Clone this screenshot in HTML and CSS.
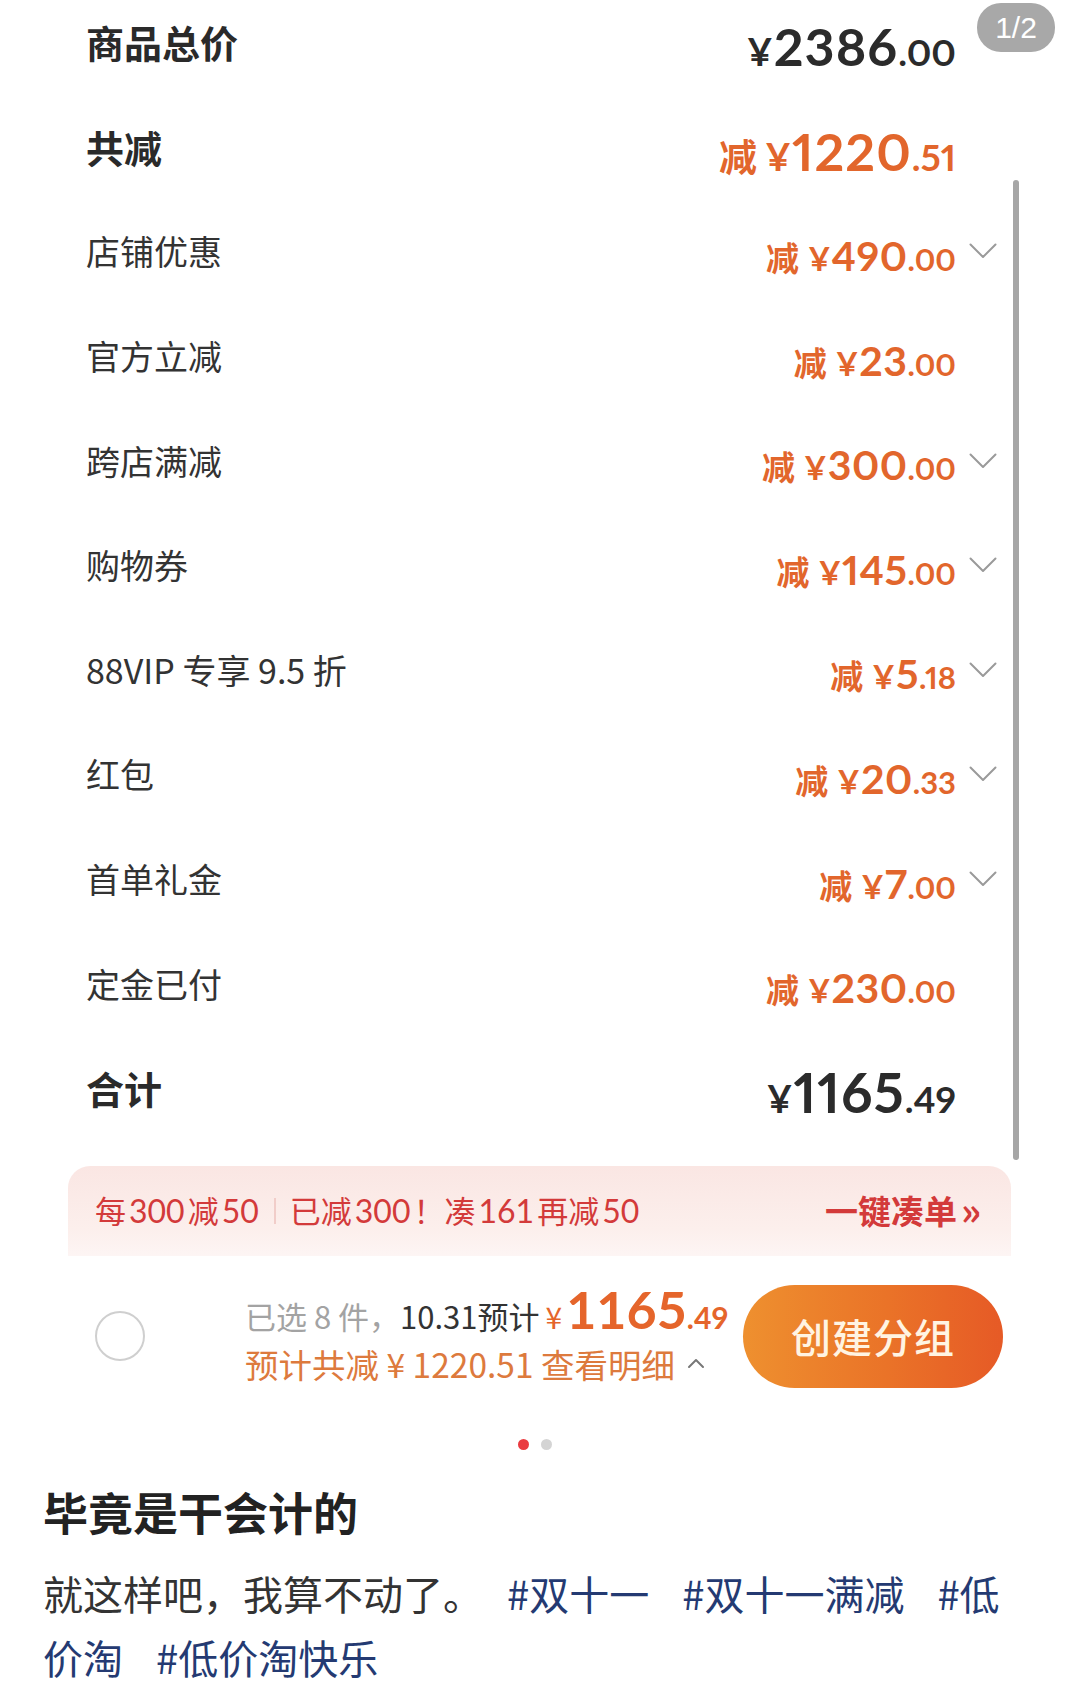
FILE: index.html
```html
<!DOCTYPE html>
<html lang="zh-CN">
<head>
<meta charset="utf-8">
<title>订单明细</title>
<link rel="stylesheet" href="styles.css">
</head>
<body>
<div class="page">
  <div class="badge">1/2</div>
  <div class="scrollbar"></div>

  <div class="list">
    <div class="row bold">
      <span class="label">商品总价</span>
      <span class="val dark big"><span class="cur">¥</span><span class="int">2386</span><span class="dec">.00</span></span>
      <span class="chev"></span>
    </div>
    <div class="row bold">
      <span class="label">共减</span>
      <span class="val big"><span class="pre">减</span><span class="cur">¥</span><span class="int">1220</span><span class="dec">.51</span></span>
      <span class="chev"></span>
    </div>
    <div class="row">
      <span class="label">店铺优惠</span>
      <span class="val"><span class="pre">减</span><span class="cur">¥</span><span class="int">490</span><span class="dec">.00</span></span>
      <span class="chev"><svg viewBox="0 0 28 16" width="28" height="16"><polyline points="1.5,1.5 14,14 26.5,1.5"/></svg></span>
    </div>
    <div class="row">
      <span class="label">官方立减</span>
      <span class="val"><span class="pre">减</span><span class="cur">¥</span><span class="int">23</span><span class="dec">.00</span></span>
      <span class="chev"></span>
    </div>
    <div class="row">
      <span class="label">跨店满减</span>
      <span class="val"><span class="pre">减</span><span class="cur">¥</span><span class="int">300</span><span class="dec">.00</span></span>
      <span class="chev"><svg viewBox="0 0 28 16" width="28" height="16"><polyline points="1.5,1.5 14,14 26.5,1.5"/></svg></span>
    </div>
    <div class="row">
      <span class="label">购物券</span>
      <span class="val"><span class="pre">减</span><span class="cur">¥</span><span class="int">145</span><span class="dec">.00</span></span>
      <span class="chev"><svg viewBox="0 0 28 16" width="28" height="16"><polyline points="1.5,1.5 14,14 26.5,1.5"/></svg></span>
    </div>
    <div class="row">
      <span class="label">88VIP 专享 9.5 折</span>
      <span class="val"><span class="pre">减</span><span class="cur">¥</span><span class="int">5</span><span class="dec">.18</span></span>
      <span class="chev"><svg viewBox="0 0 28 16" width="28" height="16"><polyline points="1.5,1.5 14,14 26.5,1.5"/></svg></span>
    </div>
    <div class="row">
      <span class="label">红包</span>
      <span class="val"><span class="pre">减</span><span class="cur">¥</span><span class="int">20</span><span class="dec">.33</span></span>
      <span class="chev"><svg viewBox="0 0 28 16" width="28" height="16"><polyline points="1.5,1.5 14,14 26.5,1.5"/></svg></span>
    </div>
    <div class="row">
      <span class="label">首单礼金</span>
      <span class="val"><span class="pre">减</span><span class="cur">¥</span><span class="int">7</span><span class="dec">.00</span></span>
      <span class="chev"><svg viewBox="0 0 28 16" width="28" height="16"><polyline points="1.5,1.5 14,14 26.5,1.5"/></svg></span>
    </div>
    <div class="row">
      <span class="label">定金已付</span>
      <span class="val"><span class="pre">减</span><span class="cur">¥</span><span class="int">230</span><span class="dec">.00</span></span>
      <span class="chev"></span>
    </div>
    <div class="row bold">
      <span class="label">合计</span>
      <span class="val dark big total"><span class="cur">¥</span><span class="int">1165</span><span class="dec">.49</span></span>
      <span class="chev"></span>
    </div>
  </div>

  <div class="promo">
    <span class="promo-rule">每<span class="pn">300</span>减<span class="pn">50</span></span>
    <span class="promo-sep"></span>
    <span class="promo-msg">已减<span class="pn">300</span>！凑<span class="pn">161</span>再减<span class="pn">50</span></span>
    <span class="promo-link">一键凑单<span class="arrows">»</span></span>
  </div>

  <div class="bar">
    <span class="radio"></span>
    <div class="summary">
      <div class="sum-line1"><span class="muted">已选 8 件，</span><span class="strong">10.31预计</span><span class="s-cur">¥</span><span class="s-int">1165</span><span class="s-dec">.49</span></div>
      <div class="sum-line2">预计共减 ¥ 1220.51 查看明细 <svg class="up" viewBox="0 0 18 12" width="18" height="12"><polyline points="2,10 9,3 16,10"/></svg></div>
    </div>
    <div class="btn">创建分组</div>
  </div>

  <div class="dots"><span class="dot on"></span><span class="dot"></span></div>

  <div class="post">
    <h1 class="title">毕竟是干会计的</h1>
    <div class="body">
      <div class="line">就这样吧，我算不动了。<span class="tag first">#双十一</span><span class="tag">#双十一满减</span><span class="tag">#低</span></div>
      <div class="line"><span class="tag cont">价淘</span><span class="tag">#低价淘快乐</span></div>
    </div>
  </div>
</div>
</body>
</html>
```

FILE: styles.css
```css
* { box-sizing: border-box; }

html, body {
  margin: 0;
  padding: 0;
  background: #ffffff;
}

body {
  font-family: "Noto Sans CJK SC", "Noto Sans", sans-serif;
  color: #333333;
  width: 1080px;
  height: 1682px;
  overflow: hidden;
}

.page {
  position: relative;
  width: 1080px;
}

/* overlays */
.badge {
  position: absolute;
  left: 977px;
  top: 13px;
  width: 78px;
  height: 49px;
  border-radius: 24px;
  background: #a8a8a8;
  color: #ffffff;
  font-family: "Liberation Sans", sans-serif;
  font-size: 30px;
  line-height: 49px;
  text-align: center;
  z-index: 2;
}

.scrollbar {
  position: absolute;
  left: 1013px;
  top: 190px;
  width: 6px;
  height: 980px;
  border-radius: 3px;
  background: #a6a6a6;
  z-index: 2;
}

/* price list */
.list {
  margin-top: -10px;
}

.row {
  display: flex;
  align-items: center;
  height: 104.6px;
  padding: 0 83px 0 86px;
}

.label {
  flex: 1;
  font-size: 34px;
  line-height: 1;
  color: #333333;
}

.row.bold .label {
  font-size: 38px;
  font-weight: 700;
  color: #2a2a2a;
}

.val {
  display: flex;
  align-items: baseline;
  color: #e2662c;
  font-family: "Lato", "Liberation Sans", sans-serif;
  font-weight: 700;
  font-variant-numeric: proportional-nums;
  line-height: 1;
  margin-top: 8px;
}

.val .pre {
  font-family: "Noto Sans CJK SC", sans-serif;
  font-weight: 700;
  font-size: 33px;
  margin-right: 9px;
}

.val .cur {
  font-size: 33px;
  margin-right: 1px;
}

.val .int {
  font-size: 41px;
  letter-spacing: 0.5px;
}

.val .dec {
  font-size: 31px;
}

.val.big .pre {
  font-size: 38px;
  margin-right: 8px;
}

.val.big .cur {
  font-size: 38px;
}

.val.big .int {
  font-size: 52px;
  letter-spacing: 1px;
}

.val.big .dec {
  font-size: 37px;
}

.val.total .int {
  font-size: 55px;
}

.val.dark {
  color: #2b2b2b;
}

.chev {
  width: 28px;
  margin-left: 13px;
  display: flex;
  align-items: center;
}

.chev svg polyline {
  fill: none;
  stroke: #9a9a9a;
  stroke-width: 2;
  stroke-linecap: round;
  stroke-linejoin: round;
}

/* promo banner */
.promo {
  display: flex;
  align-items: center;
  height: 90px;
  margin: 25px 69px 0 68px;
  padding: 0 30px 0 27px;
  border-radius: 22px 22px 0 0;
  background: linear-gradient(180deg, #fae6e3 0%, #fcefec 70%, #fdf5f4 100%);
  color: #d33a3a;
  font-size: 31px;
  line-height: 1;
}

.pn {
  font-family: "Lato", "Liberation Sans", sans-serif;
  font-size: 32px;
  margin: 0 3px;
}

.promo-sep {
  width: 2px;
  height: 26px;
  background: #f1cdc9;
  margin: 0 14px 0 12px;
}

.promo-link {
  margin-left: auto;
  font-weight: 700;
  font-size: 33px;
  display: flex;
  align-items: center;
}

.arrows {
  font-size: 38px;
  margin-left: 4px;
  margin-top: -4px;
}

/* bottom bar */
.bar {
  display: flex;
  align-items: center;
  height: 103px;
  margin-top: 29px;
  padding-left: 95px;
}

.radio {
  width: 50px;
  height: 50px;
  border-radius: 50%;
  border: 2px solid #cfcfcf;
  margin-right: 100px;
  flex: none;
}

.summary {
  flex: 1;
  display: flex;
  flex-direction: column;
}

.sum-line1 {
  height: 54px;
  display: flex;
  align-items: baseline;
  font-size: 31px;
  white-space: nowrap;
  line-height: 54px;
}

.muted {
  color: #a3a3a3;
}

.strong {
  color: #333333;
}

.s-cur {
  color: #e5652b;
  font-size: 30px;
  margin: 0 4px 0 6px;
}

.s-int {
  color: #e5652b;
  font-family: "Lato", "Liberation Sans", sans-serif;
  font-weight: 700;
  font-size: 52px;
}

.s-dec {
  color: #e5652b;
  font-family: "Lato", "Liberation Sans", sans-serif;
  font-weight: 700;
  font-size: 30px;
}

.sum-line2 {
  height: 54px;
  display: flex;
  align-items: center;
  font-size: 33.5px;
  color: #dd7a3d;
  white-space: nowrap;
}

.up {
  margin-left: 12px;
}

.up polyline {
  fill: none;
  stroke: #777777;
  stroke-width: 2;
  stroke-linecap: round;
  stroke-linejoin: round;
}

.btn {
  flex: none;
  width: 260px;
  height: 103px;
  margin-right: 77px;
  border-radius: 52px;
  background: linear-gradient(90deg, #ee902f 0%, #ea7328 55%, #e65a26 100%);
  color: #fff4e2;
  font-size: 40px;
  font-weight: 500;
  display: flex;
  align-items: center;
  justify-content: center;
  letter-spacing: 1px;
}

/* pager dots */
.dots {
  display: flex;
  justify-content: center;
  gap: 12px;
  margin-top: 51px;
  padding-right: 11px;
}

.dot {
  width: 11px;
  height: 11px;
  border-radius: 50%;
  background: #d4d4d4;
}

.dot.on {
  background: #ea3b40;
}

/* post text */
.post {
  padding: 0 43px;
}

.title {
  margin: 32px 0 0;
  font-size: 45px;
  line-height: 60px;
  font-weight: 700;
  color: #222222;
}

.body {
  margin-top: 19px;
  font-size: 40px;
  line-height: 64px;
  color: #333333;
}

.line {
  white-space: nowrap;
}

.tag {
  color: #243a72;
  margin-left: 33px;
}

.tag.first {
  margin-left: 24px;
}

.tag.cont {
  margin-left: 0;
}
```
